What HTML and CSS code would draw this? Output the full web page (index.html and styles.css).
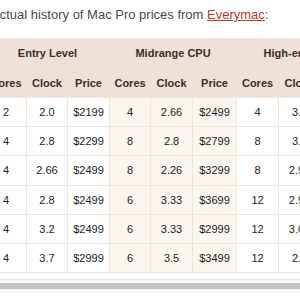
FILE: index.html
```html
<!DOCTYPE html>
<html>
<head>
<meta charset="utf-8">
<link rel="stylesheet" href="styles.css">
</head>
<body>
<div class="page">
  <p class="intro">Actual history of Mac Pro prices from <a href="#">Everymac</a>:</p>
  <table class="prices">
    <colgroup>
      <col class="c41"><col class="c41"><col class="c42">
      <col class="c41"><col class="c42"><col class="c44">
      <col class="c42"><col class="c42"><col class="c44">
    </colgroup>
    <thead>
      <tr class="group">
        <th colspan="3">Entry Level</th>
        <th colspan="3">Midrange CPU</th>
        <th colspan="3">High-end CPU</th>
      </tr>
      <tr class="cols">
        <th>Cores</th><th>Clock</th><th>Price</th>
        <th>Cores</th><th>Clock</th><th>Price</th>
        <th>Cores</th><th>Clock</th><th>Price</th>
      </tr>
    </thead>
    <tbody>
      <tr><td>2</td><td>2.0</td><td>$2199</td><td class="mid">4</td><td class="mid">2.66</td><td class="mid">$2499</td><td>4</td><td>3.0</td><td>$3299</td></tr>
      <tr><td>4</td><td>2.8</td><td>$2299</td><td class="mid">8</td><td class="mid">2.8</td><td class="mid">$2799</td><td>8</td><td>3.2</td><td>$3697</td></tr>
      <tr><td>4</td><td>2.66</td><td>$2499</td><td class="mid">8</td><td class="mid">2.26</td><td class="mid">$3299</td><td>8</td><td>2.93</td><td>$4699</td></tr>
      <tr><td>4</td><td>2.8</td><td>$2499</td><td class="mid">6</td><td class="mid">3.33</td><td class="mid">$3699</td><td>12</td><td>2.93</td><td>$4999</td></tr>
      <tr><td>4</td><td>3.2</td><td>$2499</td><td class="mid">6</td><td class="mid">3.33</td><td class="mid">$2999</td><td>12</td><td>3.06</td><td>$3799</td></tr>
      <tr><td>4</td><td>3.7</td><td>$2999</td><td class="mid">6</td><td class="mid">3.5</td><td class="mid">$3499</td><td>12</td><td>2.7</td><td>$3999</td></tr>
    </tbody>
  </table>
  <div class="scrollbar"><div class="thumb"></div></div>
</div>
</body>
</html>
```
FILE: styles.css
```css
html, body {
  margin: 0;
  padding: 0;
  background: #fff;
  overflow: hidden;
}
.page {
  width: 400px;
  margin-left: -15px;
}
.intro {
  margin: 0;
  padding: 6px 0 0 6px;
  height: 32px;
  box-sizing: border-box;
  font-family: "Liberation Sans", Arial, sans-serif;
  font-size: 13px;
  line-height: 18px;
  color: #4a4a4a;
}
.intro a {
  color: #c0392b;
  text-decoration: underline;
}
.prices {
  border-collapse: collapse;
  table-layout: fixed;
  width: 376px;
  margin-top: 6px;
  font-family: "Liberation Sans", Arial, sans-serif;
  font-size: 11px;
}
.c41 { width: 41px; }
.c42 { width: 42px; }
.c44 { width: 44px; }
.prices th {
  background: #efe1d7;
  color: #3a2f29;
  font-weight: bold;
  height: 28.5px;
  padding: 0;
  border: 1px solid #f0e3da;
  text-align: center;
}
.prices td {
  height: 28.2px;
  padding: 0;
  text-align: center;
  color: #222;
  border: 1px solid #f3e4da;
}
.prices td.mid {
  background: #fcf6f1;
}
.scrollbar {
  margin-top: 6px;
  height: 14px;
  border-top: 1px solid #e6e6e6;
  background: #fafafa;
  padding-top: 3px;
  box-sizing: border-box;
}
.thumb {
  height: 6px;
  background: #c3c3c3;
  border-radius: 3px;
}
```
